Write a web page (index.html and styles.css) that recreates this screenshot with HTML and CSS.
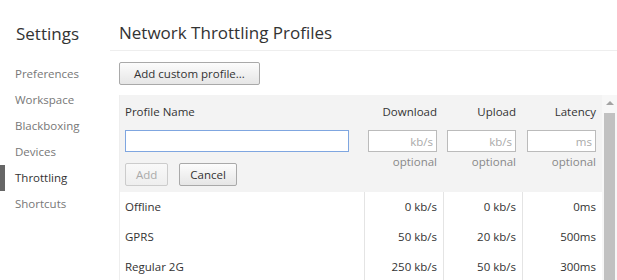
FILE: index.html
```html
<!DOCTYPE html>
<html lang="en">
<head>
<meta charset="UTF-8">
<title>Settings</title>
<link rel="stylesheet" href="styles.css">
</head>
<body>
<div class="sidebar">
<h2>Settings</h2>
<ul>
<li>Preferences</li>
<li>Workspace</li>
<li>Blackboxing</li>
<li>Devices</li>
<li class="selected">Throttling</li>
<li>Shortcuts</li>
</ul>
</div>
<div class="main-content">
<h1>Network Throttling Profiles</h1>
<div class="toolbar">
<button class="btn">Add custom profile...</button>
</div>
<div class="list-wrap">
<div class="list">
<div class="editor">
<div class="row header">
<div class="cell name">Profile Name</div>
<div class="cell">Download</div>
<div class="cell">Upload</div>
<div class="cell">Latency</div>
</div>
<div class="row inputs">
<div class="cell name">
<input class="name-input" type="text">
<div class="editor-buttons">
<button class="btn" disabled>Add</button>
<button class="btn">Cancel</button>
</div>
</div>
<div class="cell"><input type="text" placeholder="kb/s"><span class="hint">optional</span></div>
<div class="cell"><input type="text" placeholder="kb/s"><span class="hint">optional</span></div>
<div class="cell"><input type="text" placeholder="ms"><span class="hint">optional</span></div>
</div>
</div>
<div class="row item">
<div class="cell name">Offline</div>
<div class="cell">0 kb/s</div>
<div class="cell">0 kb/s</div>
<div class="cell">0ms</div>
</div>
<div class="row item">
<div class="cell name">GPRS</div>
<div class="cell">50 kb/s</div>
<div class="cell">20 kb/s</div>
<div class="cell">500ms</div>
</div>
<div class="row item">
<div class="cell name">Regular 2G</div>
<div class="cell">250 kb/s</div>
<div class="cell">50 kb/s</div>
<div class="cell">300ms</div>
</div>
</div>
<div class="scrollbar">
<div class="arrow"></div>
<div class="thumb"></div>
</div>
</div>
</div>
</body>
</html>
```

FILE: styles.css
```css
/* Reset styles */
* {
margin: 0;
padding: 0;
box-sizing: border-box;
font-family: "Open Sans", sans-serif;
}
body {
background-color: #fff;
display: flex;
height: 280px;
overflow: hidden;
color: #333;
font-size: 11.5px;
}
/* Sidebar styles */
.sidebar {
width: 110px;
flex: none;
}
.sidebar h2 {
font-size: 17px;
font-weight: normal;
color: #333;
padding: 22px 0 0 16px;
height: 61px;
}
.sidebar ul {
list-style: none;
}
.sidebar ul li {
height: 26px;
line-height: 26px;
padding-left: 15px;
color: #777;
position: relative;
}
.sidebar ul li.selected {
color: #333;
}
.sidebar ul li.selected::before {
content: "";
position: absolute;
left: 0;
top: 0;
width: 5px;
height: 26px;
background-color: #666;
}
/* Main content styles */
.main-content {
flex: 1;
display: flex;
flex-direction: column;
}
.main-content h1 {
flex: none;
font-size: 17px;
font-weight: normal;
color: #333;
height: 51px;
padding: 21px 0 0 9px;
border-bottom: 1px solid #eee;
}
.toolbar {
flex: none;
padding: 11px 0 0 9px;
height: 44px;
}
/* Button styles */
.btn {
height: 23px;
padding: 0 14px;
border: 1px solid #a9a9a9;
border-radius: 2px;
background: linear-gradient(#fcfcfc, #e6e6e6);
color: #333;
font-size: 11.5px;
}
.btn:disabled {
color: #aaa;
border-color: #ccc;
background: linear-gradient(#f9f9f9, #eee);
}
/* Profiles list */
.list-wrap {
display: flex;
margin-left: 9px;
flex: 1;
}
.list {
flex: 1;
border-left: 1px solid #eee;
}
.row {
display: grid;
grid-template-columns: 244px 79px 79px 1fr;
}
.cell {
text-align: right;
padding-right: 6px;
}
.cell.name {
text-align: left;
padding-left: 5px;
}
.editor {
background-color: #f3f3f3;
padding-bottom: 6px;
}
.header .cell {
height: 33px;
line-height: 33px;
}
.inputs .cell {
display: flex;
flex-direction: column;
align-items: flex-end;
padding-top: 2px;
}
.inputs .cell.name {
align-items: flex-start;
}
.inputs input {
width: 69px;
height: 22px;
border: 1px solid #bbb;
background: #fff;
text-align: right;
padding: 0 3px;
font-size: 11.5px;
outline: none;
}
.inputs input::placeholder {
color: #aaa;
}
.inputs .name-input {
width: 224px;
border-color: #7fa6e0;
text-align: left;
}
.hint {
color: #888;
line-height: 20px;
}
.editor-buttons {
margin-top: 11px;
display: flex;
gap: 11px;
}
.editor-buttons .btn {
padding: 0 10px;
}
.item .cell {
height: 30px;
line-height: 30px;
border-left: 1px solid #e4e4e4;
}
.item .cell.name {
border-left: none;
}
/* Fake scrollbar */
.scrollbar {
width: 15px;
background-color: #f7f7f7;
display: flex;
flex-direction: column;
align-items: center;
}
.arrow {
margin-top: 6px;
width: 0;
height: 0;
border-left: 4px solid transparent;
border-right: 4px solid transparent;
border-bottom: 4px solid #a3a3a3;
}
.thumb {
margin-top: 8px;
width: 11px;
flex: 1;
background-color: #c1c1c1;
}
```
